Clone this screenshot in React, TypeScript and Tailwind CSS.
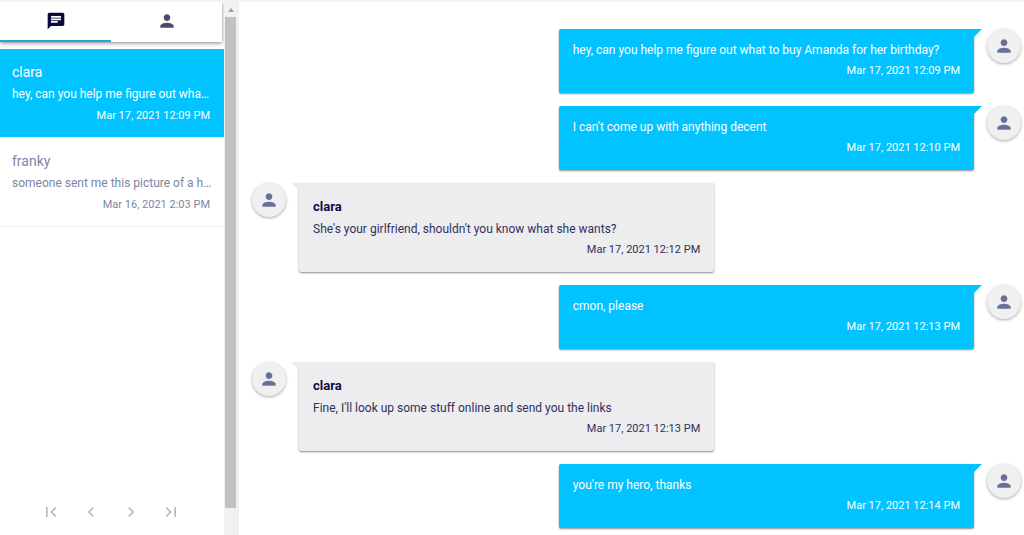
import { MdChat, MdChevronLeft, MdChevronRight, MdFirstPage, MdLastPage, MdPerson } from "react-icons/md";

type Conversation = { name: string; preview: string; date: string; active?: boolean };
type Message = { from?: string; text: string; date: string };

const conversations: Conversation[] = [
  {
    name: "clara",
    preview: "hey, can you help me figure out wha…",
    date: "Mar 17, 2021 12:09 PM",
    active: true,
  },
  { name: "franky", preview: "someone sent me this picture of a h…", date: "Mar 16, 2021 2:03 PM" },
];

const messages: Message[] = [
  { text: "hey, can you help me figure out what to buy Amanda for her birthday?", date: "Mar 17, 2021 12:09 PM" },
  { text: "I can't come up with anything decent", date: "Mar 17, 2021 12:10 PM" },
  { from: "clara", text: "She's your girlfriend, shouldn't you know what she wants?", date: "Mar 17, 2021 12:12 PM" },
  { text: "cmon, please", date: "Mar 17, 2021 12:13 PM" },
  { from: "clara", text: "Fine, I'll look up some stuff online and send you the links", date: "Mar 17, 2021 12:13 PM" },
  { text: "you're my hero, thanks", date: "Mar 17, 2021 12:14 PM" },
];

const pages = [
  { label: "First page", Icon: MdFirstPage },
  { label: "Previous page", Icon: MdChevronLeft },
  { label: "Next page", Icon: MdChevronRight },
  { label: "Last page", Icon: MdLastPage },
];

function Avatar() {
  return (
    <div className="flex size-[34px] shrink-0 items-center justify-center rounded-full bg-[#f0f0f0] text-[#68709a] shadow-[0_1px_3px_rgba(0,0,0,0.35)]">
      <MdPerson size={20} />
    </div>
  );
}

function ConversationItem({ name, preview, date, active }: Conversation) {
  return (
    <li className={active ? "bg-[#00c3ff] text-white" : "border-b border-[#f0f0f0] text-[#7d85a3]"}>
      <button type="button" className="block w-full pt-3 pr-[14px] pb-[11px] pl-3 text-left">
        <span className="block text-[14px] leading-[22px]">{name}</span>
        <span className="block text-[12px] leading-[23px] whitespace-nowrap">{preview}</span>
        <span className="block text-right text-[11px] leading-5">{date}</span>
      </button>
    </li>
  );
}

function MessageRow({ from, text, date }: Message) {
  const received = from !== undefined;
  return (
    <li className={received ? "flex gap-[13px]" : "flex flex-row-reverse gap-[13px]"}>
      <Avatar />
      <div
        className={
          received
            ? "relative w-[54%] rounded-xs rounded-tl-none bg-[#ededef] px-[14px] py-3 text-[#30305a] shadow-[0_1px_2px_rgba(0,0,0,0.45)]"
            : "relative w-[54%] rounded-xs rounded-tr-none bg-[#00c3ff] px-[14px] pt-[11px] pb-3 text-white shadow-[0_1px_2px_rgba(0,0,0,0.45)]"
        }
      >
        <span
          className={
            received
              ? "absolute top-0 right-full size-2 bg-[#ededef] [clip-path:polygon(0_0,100%_0,100%_100%)]"
              : "absolute top-0 left-full size-2 bg-[#00c3ff] [clip-path:polygon(0_0,100%_0,0_100%)]"
          }
        />
        {received && <h2 className="mb-px text-[13px] leading-[23px] font-bold text-[#0c0c42]">{from}</h2>}
        <p className="text-[12px] leading-[21px]">{text}</p>
        <p className="text-right text-[11px] leading-5">{date}</p>
      </div>
    </li>
  );
}

export default function App() {
  return (
    <div className="flex h-screen flex-col overflow-hidden border-t-2 border-[#f3f3f3] bg-white font-[Roboto,sans-serif]">
      <div className="flex min-h-0 flex-1">
        <aside className="flex w-56 shrink-0 flex-col">
          <nav className="mr-0.5 flex h-10 shrink-0 shadow-[0_1px_4px_rgba(0,0,0,0.5)]">
            <button
              type="button"
              aria-label="Chats"
              className="flex flex-1 items-center justify-center border-b-2 border-[#1fa9d2] text-[#0b0b3b]"
            >
              <MdChat size={20} />
            </button>
            <button
              type="button"
              aria-label="People"
              className="flex flex-1 items-center justify-center border-b-2 border-transparent text-[#4b4b6c]"
            >
              <MdPerson size={20} />
            </button>
          </nav>
          <ul className="mt-[7px] flex flex-col gap-px">
            {conversations.map((c) => (
              <ConversationItem key={c.name} {...c} />
            ))}
          </ul>
          <div className="mt-auto mr-0.5 mb-[3px] flex justify-center">
            {pages.map(({ label, Icon }) => (
              <button
                key={label}
                type="button"
                aria-label={label}
                className="flex size-10 items-center justify-center text-[#b9b9b9]"
              >
                <Icon size={20} />
              </button>
            ))}
          </div>
        </aside>
        <div aria-hidden="true" className="flex w-[15px] shrink-0 flex-col bg-[#f1f1f1] pr-[3px] pb-[27px] pl-px">
          <div className="flex h-[15px] shrink-0 items-center justify-center">
            <svg viewBox="0 0 6 4" className="h-1 w-1.5 fill-[#a0a0a0]">
              <path d="M3 0 6 4H0Z" />
            </svg>
          </div>
          <div className="flex-1 bg-[#c1c1c1]" />
        </div>
        <main className="min-w-0 flex-1 overflow-hidden">
          <ul className="flex flex-col gap-[13px] pt-[27px] pr-[3px] pl-[13px]">
            {messages.map((m, i) => (
              <MessageRow key={i} {...m} />
            ))}
          </ul>
        </main>
      </div>
    </div>
  );
}
